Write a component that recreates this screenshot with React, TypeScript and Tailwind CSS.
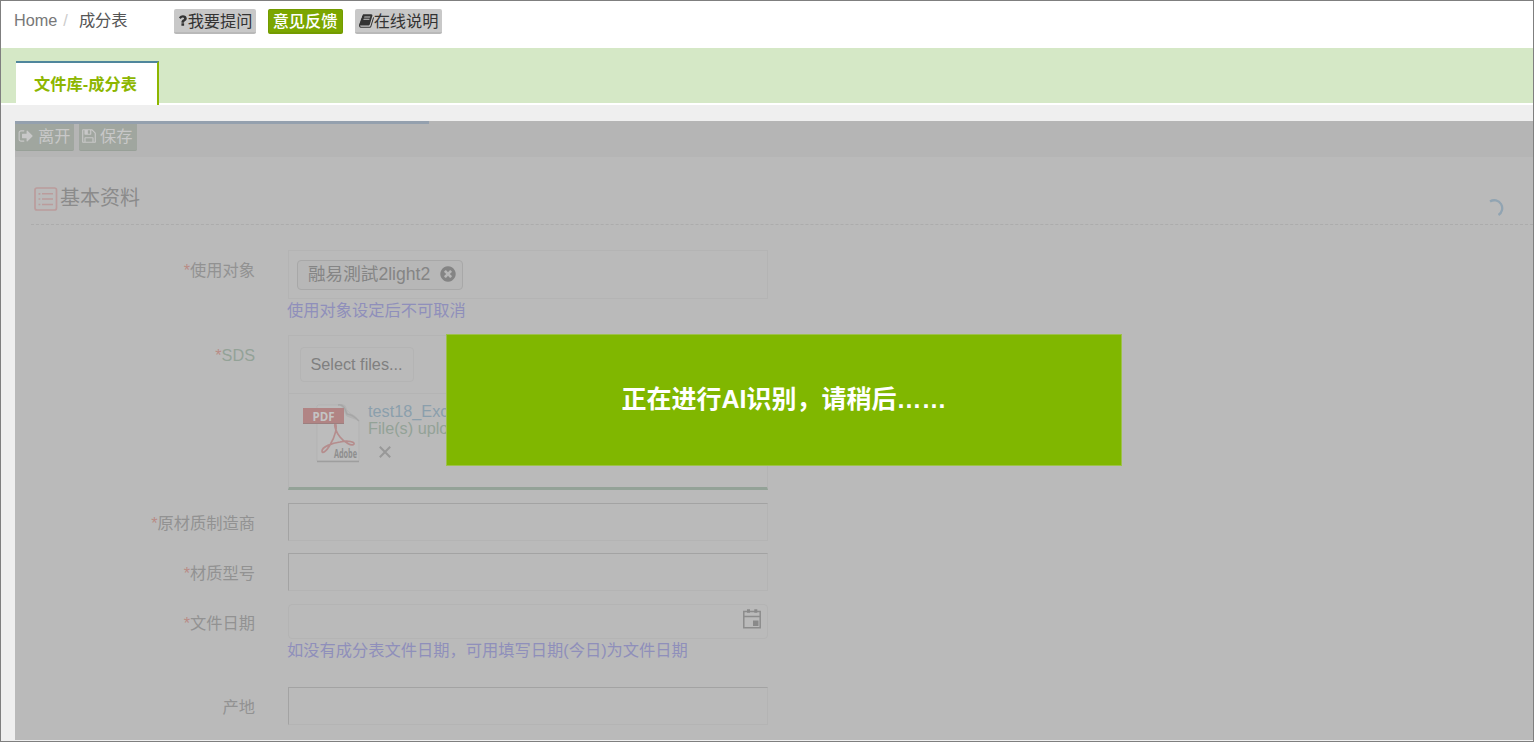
import type { ReactNode } from 'react';
import clsx from 'clsx';

const ICONS = {
  question:
    'M1088 1256v240q0 16-12 28t-28 12h-240q-16 0-28-12t-12-28v-240q0-16 12-28t28-12h240q16 0 28 12t12 28zm316-600q0 54-15.500 101t-35 76.500-55 59.500-57.500 43.500-61 35.500q-41 23-68.500 65t-27.500 67q0 17-12 32.500t-28 15.500h-240q-15 0-25.500-18.500t-10.500-37.500v-45q0-83 65-156.500t143-108.500q59-27 84-56t25-76q0-42-46.500-74t-107.500-32q-65 0-108 29-35 25-107 115-13 16-31 16-12 0-25-8l-164-125q-13-10-15.500-25t5.500-28q160-266 464-266 80 0 161 31t146 83 106 127.500 41 158.500z',
  book: 'M1639 478q40 57 18 129l-275 906q-19 64-76.500 107.500t-122.500 43.500h-923q-77 0-148.500-53.500t-99.500-131.500q-24-67-2-127 0-4 3-27t4-37q1-8-3-21.500t-3-19.500q2-11 8-21t16.500-23.500 16.500-23.500q23-38 45-91.500t30-91.500q3-10 .5-30t-.5-28q3-11 17-28t17-23q21-36 42-92t25-90q1-9-2.500-32t.5-28q4-13 22-30.500t22-22.500q19-26 42.500-84.500t27.500-96.500q1-8-3-25.500t-2-26.500q2-8 9-18t18-23 17-21q8-12 16.500-30.500t15-35 16-36 19.500-32 26.500-23.500 36-11.500 47.500 5.500l-1 3q38-9 51-9h761q74 0 114 56t18 130l-274 906q-36 119-71.500 153.500t-128.500 34.500h-869q-27 0-38 15-11 16-1 43 24 70 144 70h923q29 0 56-15.500t35-41.500l300-987q7-22 5-57 38 15 59 43zm-1064 2q-4 13 2 22.500t20 9.500h608q13 0 25.500-9.500t16.500-22.500l21-64q4-13-2-22.500t-20-9.500h-608q-13 0-25.500 9.500t-16.500 22.500zm-83 256q-4 13 2 22.500t20 9.500h608q13 0 25.500-9.500t16.500-22.500l21-64q4-13-2-22.500t-20-9.500h-608q-13 0-25.500 9.500t-16.500 22.500z',
  signOut:
    'M704 1440q0 4 1 20t.5 26.500-3 23.500-10 19.500-20.500 6.500h-320q-119 0-203.500-84.500t-84.500-203.500v-704q0-119 84.500-203.500t203.500-84.500h320q13 0 22.500 9.500t9.500 22.500q0 4 1 20t.5 26.500-3 23.500-10 19.500-20.500 6.500h-320q-66 0-113 47t-47 113v704q0 66 47 113t113 47h312l11.500 1 11.500 3 8 5.500 7 9 2 13.500zm928-544q0 26-19 45l-544 544q-19 19-45 19t-45-19-19-45v-288h-448q-26 0-45-19t-19-45v-384q0-26 19-45t45-19h448v-288q0-26 19-45t45-19 45 19l544 544q19 19 19 45z',
  save: 'M512 1536h768v-384h-768v384zm896 0h128v-896q0-14-10-38.500t-20-34.500l-281-281q-10-10-34-20t-39-10v416q0 40-28 68t-68 28h-576q-40 0-68-28t-28-68v-416h-128v1280h128v-416q0-40 28-68t68-28h832q40 0 68 28t28 68v416zm-384-928v-320q0-13-9.500-22.500t-22.500-9.500h-192q-13 0-22.500 9.500t-9.500 22.500v320q0 13 9.500 22.500t22.500 9.500h192q13 0 22.500-9.500t9.500-22.500zm640 32v928q0 40-28 68t-68 28h-1344q-40 0-68-28t-28-68v-1344q0-40 28-68t68-28h928q40 0 88 20t76 48l280 280q28 28 48 76t20 88z',
  timesCircle:
    'M1277 1122q0-26-19-45l-181-181 181-181q19-19 19-45 0-27-19-46l-90-90q-19-19-46-19-26 0-45 19l-181 181-181-181q-19-19-45-19-27 0-46 19l-90 90q-19 19-19 46 0 26 19 45l181 181-181 181q-19 19-19 45 0 27 19 46l90 90q19 19 46 19 26 0 45-19l181-181 181 181q19 19 45 19 27 0 46-19l90-90q19-19 19-46zm387-226q0 209-103 385.500t-279.500 279.500-385.500 103-385.500-103-279.500-279.500-103-385.500 103-385.500 279.500-279.500 385.500-103 385.500 103 279.500 279.500 103 385.500z',
};

function Icon({ name, className }: { name: keyof typeof ICONS; className?: string }) {
  return (
    <svg viewBox="0 0 1792 1792" fill="currentColor" className={clsx('shrink-0', className)}>
      <path d={ICONS[name]} />
    </svg>
  );
}

function ListIcon() {
  return (
    <svg width="24" height="24" viewBox="0 0 24 24" fill="none" stroke="#bb9c9c" className="shrink-0">
      <rect x="1" y="1" width="21.500" height="22" rx="2" strokeWidth="1.700" />
      <path d="M8 6.800h11M8 12h11M8 17.500h11" strokeWidth="1.500" />
      <path d="M4.500 6.800h1.800M4.500 12h1.800M4.500 17.500h1.800" strokeWidth="1.700" />
    </svg>
  );
}

function CalendarIcon() {
  return (
    <svg width="18" height="20" viewBox="0 0 18 20" fill="none" className="shrink-0">
      <path d="M.8 2.500h16.400v16.200H.8zM.8 7.500h16.400" stroke="#8c8c8c" strokeWidth="1.500" />
      <path d="M4 .3h3v3.500H4zM11.300.3h3v3.500h-3zM10 11.500h5.500V17H10z" fill="#8a8a8a" />
    </svg>
  );
}

function PdfIcon() {
  return (
    <svg width="58" height="60" viewBox="0 0 58 60" className="shrink-0 overflow-visible">
      <path d="M15 2h23l18 16v40H14V3z" fill="#bcbcbc" stroke="#b3b3b3" strokeWidth="1" />
      <path d="M36 2c7-3 8 3 9 9 5-1 8 2 11 7L45 14c-4-1-3-9-9-12z" fill="#b2b2b2" />
      <path d="M35 2c5-1 7 3 9 9 4 0 8 3 12 7" fill="none" stroke="#a6a6a6" strokeWidth="1.500" />
      <path d="M14 58.500h42" stroke="#9e9e9e" strokeWidth="1.500" />
      <path
        d="M32 20c3 3 0 14-5 22-4 7-8 9-8 6 0-4 10-8 18-9 8-2 15 0 14 2-2 3-10-2-14-7-4-5-6-11-5-14z"
        fill="none"
        stroke="#b58d8d"
        strokeWidth="1.700"
      />
      <path d="M0 5h41v16H0z" fill="#b18484" />
      <path d="M0 20.500h41" stroke="#9c7f7f" />
      <text x="9.500" y="18" fontSize="13" fontWeight="700" fill="#c4c4c4" fontFamily="Open Sans, sans-serif" textLength="22" lengthAdjust="spacingAndGlyphs">
        PDF
      </text>
      <text x="31" y="55" fontSize="11.500" fontWeight="700" fill="#8e8e8e" fontFamily="Open Sans, sans-serif" textLength="23" lengthAdjust="spacingAndGlyphs">
        Adobe
      </text>
    </svg>
  );
}

function Field({ label, required = true, className, labelClass, children }: {
  label: string;
  required?: boolean;
  className: string;
  labelClass?: string;
  children: ReactNode;
}) {
  return (
    <div className={clsx('flex', className)}>
      <div className={clsx('w-[240px] shrink-0 pt-2 text-right leading-6', labelClass || 'text-[#929292]')}>
        {required && <span className="text-[#b98c86]">*</span>}
        {label}
      </div>
      <div className="ml-[33px] w-[480px] shrink-0">{children}</div>
    </div>
  );
}

const TextBox = () => (
  <div className="h-[38px] border border-t-[#a3a3a3] border-r-[#b4b4b4] border-b-[#b4b4b4] border-l-[#a3a3a3]" />
);

export default function App() {
  return (
    <div className="relative flex h-[742px] w-[1534px] flex-col overflow-hidden border border-[#7f7f7f] bg-white font-['Liberation_Sans','Noto_Sans_CJK_SC',sans-serif] text-[16.25px]">
      {/* Breadcrumb */}
      <div className="flex h-[47px] shrink-0 items-start pt-2 pl-[13px] leading-[22px] text-[#555]">
        <span className="text-[#777]">Home</span>
        <span className="ml-[6px] text-[#ccc]">/</span>
        <span className="ml-[11px]">成分表</span>
        <div className="ml-[46px] flex h-[25px] w-[82px] items-center rounded-xs border-b-2 border-[#b9b9b9] bg-[#c8c8c8] pl-[1px] whitespace-nowrap text-[#333]">
          <Icon name="question" className="-mr-[2px] size-[15px]" />
          我要提问
        </div>
        <div className="ml-3 flex h-[25px] w-[75px] items-center justify-center rounded-xs border border-b-2 border-[#739b00] bg-[#7ba600] font-medium whitespace-nowrap text-white">
          意见反馈
        </div>
        <div className="ml-3 flex h-[25px] w-[87px] items-center rounded-xs border-b-2 border-[#b9b9b9] bg-[#c8c8c8] pl-1 whitespace-nowrap text-[#333]">
          <Icon name="book" className="mt-px size-[16px] -mr-px" />
          在线说明
        </div>
      </div>

      {/* Tabs */}
      <div className="flex h-[57px] shrink-0 items-end border-b-2 border-white bg-[#d5e8c6] pl-[15px]">
        <div className="-mb-0.5 flex h-11 w-[143px] items-center justify-center border-t-2 border-r-2 border-t-[#4f869c] border-r-[#8db600] bg-white pr-[2px] font-bold whitespace-nowrap text-[#8db600]">
          文件库-成分表
        </div>
      </div>

      <div className="flex flex-1 flex-col bg-[#efefef] pt-4 pl-[14px]">
        <div className="h-[619px] bg-[#bababa]">
          {/* Toolbar */}
          <div className="h-9 bg-[#b5b5b5]">
            <div className="h-[3px] w-[414px] bg-[#94a0ae]" />
            <div className="flex gap-[5px] leading-6 text-[#c8c8c8]">
              <div className="flex h-[27px] w-[59px] items-center rounded-b-xs border-b border-[#98a098] bg-[#a0a69f] pb-[2px] pl-[3px] whitespace-nowrap">
                <Icon name="signOut" className="mr-1 size-4" />
                离开
              </div>
              <div className="flex h-[27px] w-[58px] items-center rounded-b-xs border-b border-[#98a098] bg-[#a0a69f] pb-[2px] pl-[2px] whitespace-nowrap">
                <Icon name="save" className="mr-[3px] size-4" />
                保存
              </div>
            </div>
          </div>

          {/* Section title */}
          <div className="ml-4 flex h-[68px] items-center border-b border-dashed border-[#acacac] pt-[17px] pl-[3px]">
            <ListIcon />
            <span className="ml-[2px] -mt-[3px] text-[20px] text-[#8b8b8b]">基本资料</span>
            <svg width="20" height="20" viewBox="0 0 20 20" fill="none" className="mt-[20px] mr-[28px] ml-auto">
              <path d="M5 2.500A7.500 7.500 0 0 1 13.500 16" stroke="#91a4b2" strokeWidth="2.300" />
            </svg>
          </div>

          <div className="pt-[25px]">
            <Field label="使用对象" className="h-[85px]">
              <div className="h-[49px] border border-[#b4b4b4] pt-[9px] pl-2">
                <div className="flex h-[30px] w-[166px] items-center rounded border border-[#a8a8a8] bg-[#b7b7b7] pb-[2px] pl-[10px] text-[17.6px] whitespace-nowrap text-[#858585]">
                  融易測試2light2
                  <Icon name="timesCircle" className="ml-[9px] size-[18px] text-[#848484]" />
                </div>
              </div>
              <p className="-mt-px -ml-px leading-6 text-[#8f8fbb]">使用对象设定后不可取消</p>
            </Field>

            <Field label="SDS" className="h-[168px]" labelClass="text-[#93a297]">
              <div className="h-[155px] border border-b-3 border-[#b4b4b4] border-b-[#93a297]">
                <div className="flex h-[58px] items-center border-b border-[#b4b4b4] pl-[11px]">
                  <div className="flex h-[35px] w-[114px] items-center justify-center rounded border border-[#b4b4b4] pr-px text-[#808080]">
                    Select files...
                  </div>
                </div>
                <div className="flex pt-[9px] pl-[14px]">
                  <PdfIcon />
                  <div className="ml-[7px] leading-[17px] whitespace-nowrap">
                    <div className="text-[#8b9fac]">test18_Excel.pdf</div>
                    <div className="text-[#93a297]">File(s) uploaded successfully.</div>
                    <svg width="12" height="12" viewBox="0 0 12 12" className="mt-[9px] ml-[11px]">
                      <path d="M.8.8l10.400 10.400M11.200.8L.8 11.200" stroke="#989898" strokeWidth="2" />
                    </svg>
                  </div>
                </div>
              </div>
            </Field>

            <Field label="原材质制造商" className="h-[50px]">
              <TextBox />
            </Field>
            <Field label="材质型号" className="h-[50px]">
              <TextBox />
            </Field>
            <Field label="文件日期" className="h-[84px]">
              <div className="mt-px flex h-[35px] items-start justify-end rounded border border-[#b4b4b4] pt-1 pr-[6px]">
                <CalendarIcon />
              </div>
              <p className="-mt-px -ml-px leading-6 whitespace-nowrap text-[#8f8fbb]">如没有成分表文件日期，可用填写日期(今日)为文件日期</p>
            </Field>
            <Field label="产地" required={false} className="h-[50px]">
              <TextBox />
            </Field>
          </div>
        </div>
      </div>

      {/* Progress dialog */}
      <div className="absolute top-[333px] left-[445px] flex h-[132px] w-[676px] items-center justify-center border border-[#9dc14a] bg-[#80b700] text-[25px] font-bold whitespace-nowrap text-white">
        正在进行AI识别，请稍后……
      </div>
    </div>
  );
}
